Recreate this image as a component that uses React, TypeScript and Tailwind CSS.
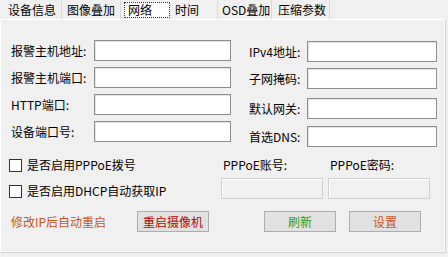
import React from "react";

const font = { fontFamily: '"Noto Sans CJK SC", "Liberation Sans", sans-serif' };

function Input({ w }: { w: string }) {
  return <div className={`h-[21px] ${w} bg-white border border-[#8d8d8d] shadow-[inset_1px_1px_0_#e6e6e6]`} />;
}

function Tab({ label, w, pl }: { label: string; w: string; pl: string }) {
  return (
    <div className={`${w} ${pl} shrink-0 h-[19px] flex items-center border-r border-[#dadada] whitespace-nowrap`}>
      <span className="leading-[14px] whitespace-nowrap">{label}</span>
    </div>
  );
}

export default function App() {
  const leftRows = ["报警主机地址:", "报警主机端口:", "HTTP端口:", "设备端口号:"];
  return (
    <div className="w-[448px] h-[257px] bg-[#f0f0f0] text-[12px] text-black overflow-hidden" style={font}>
      <div className="flex h-[19px] pl-[4px]">
        <Tab label="设备信息" w="w-[58px]" pl="pl-[4px]" />
        <Tab label="图像叠加" w="w-[59px]" pl="pl-[5px]" />
        <div className="w-[50px] shrink-0 h-[19px] flex items-center pl-[3px]">
          <span className="border border-dotted border-[#333] pl-[3px] pr-[17px] leading-[14px] bg-white">网络</span>
        </div>
        <Tab label="时间" w="w-[47px]" pl="pl-[4px]" />
        <Tab label="OSD叠加" w="w-[54px]" pl="pl-[4px]" />
        <Tab label="压缩参数" w="w-[58px]" pl="pl-[6px]" />
      </div>
      <div className="w-[446px] h-[234px] border border-[#d4d4d4] border-l-white border-t-white shadow-[inset_-1px_-1px_0_#fafafa]">
        <div className="flex pt-[20px]">
          <div className="flex flex-col gap-[6px] w-[231px]">
            {leftRows.map((l) => (
              <div key={l} className="flex items-center">
                <span className="w-[93px] pl-[10px]">{l}</span>
                <Input w="w-[137px]" />
              </div>
            ))}
          </div>
          <div className="flex flex-col pl-[17px] pt-[1px]">
            <div className="flex items-center">
              <span className="w-[58px]">IPv4地址:</span>
              <Input w="w-[130px]" />
            </div>
            <div className="flex items-center mt-[6px]">
              <span className="w-[58px]">子网掩码:</span>
              <Input w="w-[130px]" />
            </div>
            <div className="flex items-center mt-[9px]">
              <span className="w-[58px]">默认网关:</span>
              <Input w="w-[130px]" />
            </div>
            <div className="flex items-center mt-[7px]">
              <span className="w-[58px]">首选DNS:</span>
              <Input w="w-[130px]" />
            </div>
          </div>
        </div>
        <div className="flex mt-[11px]">
          <div className="flex flex-col w-[220px] pl-[8px] gap-[12px]">
            <div className="flex items-center gap-[5px] h-[14px]">
              <div className="w-[13px] h-[13px] bg-white border border-[#333]" />
              <span>是否启用PPPoE拨号</span>
            </div>
            <div className="flex items-center gap-[5px] h-[14px]">
              <div className="w-[13px] h-[13px] bg-white border border-[#333]" />
              <span>是否启用DHCP自动获取IP</span>
            </div>
          </div>
          <div className="flex gap-[5px]">
            <div className="flex flex-col gap-[6px]">
              <span className="leading-[14px] pl-[2px]">PPPoE账号:</span>
              <div className="w-[102px] h-[21px] border border-[#d0d0d0] bg-[#f0f0f0] shadow-[inset_1px_1px_0_#fff]" />
            </div>
            <div className="flex flex-col gap-[6px]">
              <span className="leading-[14px] pl-[2px]">PPPoE密码:</span>
              <div className="w-[102px] h-[21px] border border-[#d0d0d0] bg-[#f0f0f0] shadow-[inset_1px_1px_0_#fff]" />
            </div>
          </div>
        </div>
        <div className="flex items-center mt-[12px] h-[21px]">
          <span className="pl-[10px] w-[136px] text-[#c8561e]">修改IP后自动重启</span>
          <div className="w-[72px] h-[21px] bg-[#e1e1e1] border border-[#adadad] flex items-center justify-center text-[#c00000]">重启摄像机</div>
          <div className="w-[55px]" />
          <div className="w-[72px] h-[21px] bg-[#e1e1e1] border border-[#adadad] flex items-center justify-center text-[#22a022]">刷新</div>
          <div className="w-[13px]" />
          <div className="w-[72px] h-[21px] bg-[#e1e1e1] border border-[#adadad] flex items-center justify-center text-[#c8561e]">设置</div>
        </div>
      </div>
    </div>
  );
}
